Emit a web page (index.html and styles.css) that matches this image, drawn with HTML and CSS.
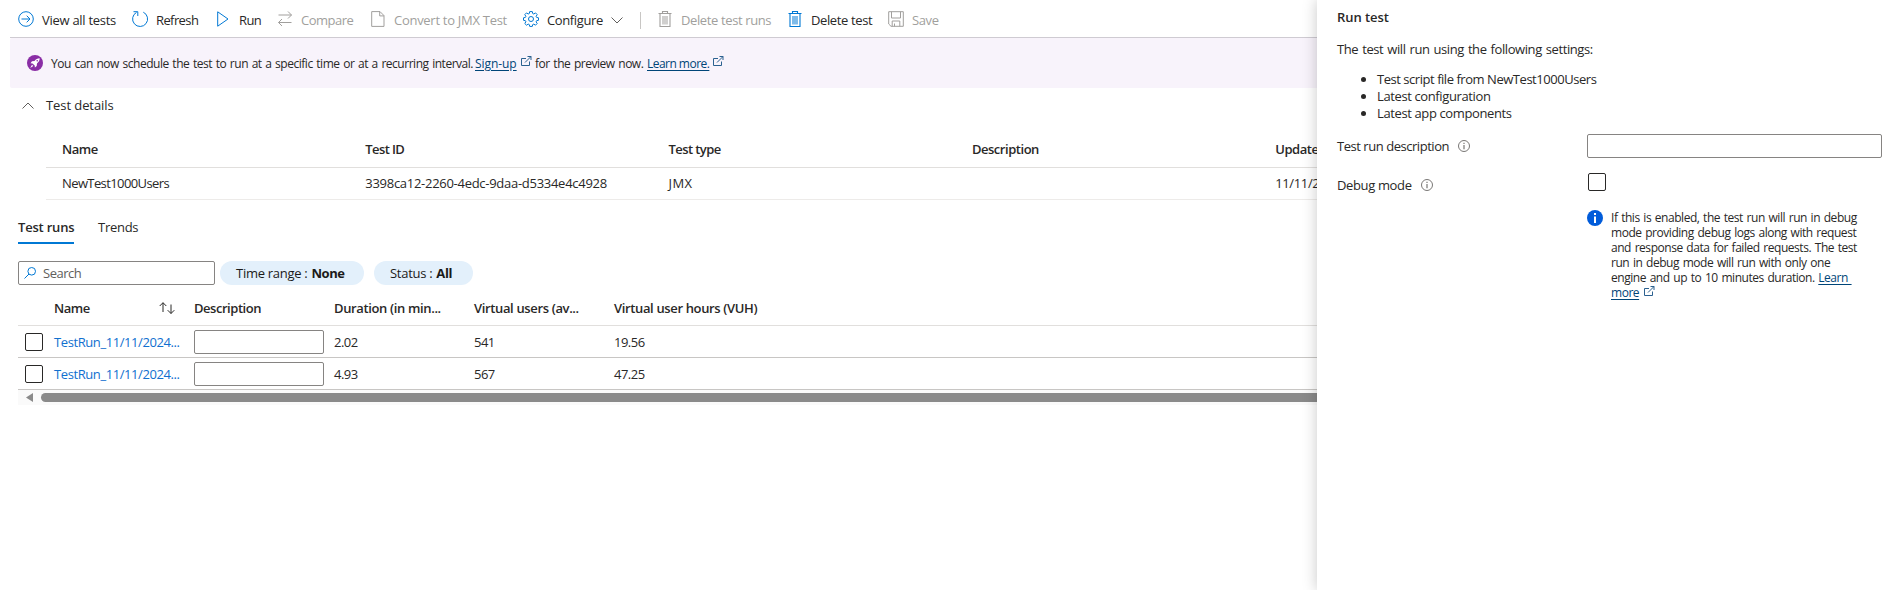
FILE: index.html
```html
<!DOCTYPE html>
<html lang="en">
<head>
<meta charset="utf-8">
<title>Run test</title>
<link rel="stylesheet" href="styles.css">
</head>
<body>
<svg class="defs" aria-hidden="true">
  <symbol id="ext" viewBox="0 0 12 12"><path d="M6 3.500H1.500v7h8V6.500M5 7.500 11 1.500M7.500 1.500h3.500V5" fill="none" stroke="currentColor" stroke-width="1"/></symbol>
  <symbol id="trash" viewBox="0 0 16 16"><path d="M1.500 2.500h13M5.500 2.500v-2h5v2M3 2.500v13h10v-13" fill="none" stroke="currentColor" stroke-width="1.100"/><path d="M5 5h6v8.500H5z" fill="currentColor" opacity=".5"/></symbol>
  <symbol id="info" viewBox="0 0 12 12"><circle cx="6" cy="6" r="5.500" fill="none" stroke="currentColor"/><path d="M6 5v4.200M6 2.700V4" stroke="currentColor" stroke-width="1.200"/></symbol>
</svg>
<div class="app">
  <main class="main">
    <nav class="toolbar">
      <button class="cmd w-view"><svg class="icon" viewBox="0 0 16 16"><circle cx="8" cy="8" r="7.300"/><path d="M3.500 8h8.500M8.700 4.700 12 8l-3.300 3.300"/></svg><span class="s3">View all tests</span></button>
      <button class="cmd w-refresh"><svg class="icon" viewBox="0 0 16 16"><path d="M11.300 1.200A7.500 7.500 0 1 1 4.500 1.400M1.500.700h4.300V5"/></svg><span class="s6">Refresh</span></button>
      <button class="cmd w-run"><svg class="icon" viewBox="0 0 16 16"><path d="M2.700.8v14.400L13 8z"/></svg><span class="s6">Run</span></button>
      <button class="cmd w-compare off"><svg class="icon" viewBox="0 0 16 16"><path d="M1.500 4h13M11 .5 14.500 4 11 7.500M14.500 11.500h-13M5 8l-3.500 3.500L5 15"/></svg><span class="s5">Compare</span></button>
      <button class="cmd w-convert off"><svg class="icon" viewBox="0 0 16 16"><path d="M1.700.600h8.300l4 4v10.800H1.700zM9.700.600v4.300h4.300"/></svg><span class="s3">Convert to JMX Test</span></button>
      <button class="cmd w-config"><svg class="icon gear" viewBox="0 0 16 16"><path d="M6.700.600h2.600l.4 1.900 1.100.5 1.700-1.100 1.700 1.700-1.100 1.700.5 1.100 1.900.4v2.500l-1.900.4-.5 1.100 1.100 1.700-1.700 1.700-1.700-1.100-1.100.5-.4 1.800H6.700l-.4-1.800-1.100-.5-1.700 1.100-1.700-1.700 1.100-1.700-.5-1.100-1.900-.4V6.800l1.900-.4.5-1.100-1.100-1.700 1.700-1.700L5.200 3l1.100-.5z"/><circle cx="8" cy="8" r="2.500"/></svg><span class="s4">Configure</span><svg class="chev" viewBox="0 0 12 7"><path d="M.5.500 6 6 11.500.5"/></svg></button>
      <i class="sep"></i>
      <button class="cmd w-del off"><svg class="icon fill"><use href="#trash"/></svg><span class="s4">Delete test runs</span></button>
      <button class="cmd w-delt"><svg class="icon fill"><use href="#trash"/></svg><span class="s4">Delete test</span></button>
      <button class="cmd off"><svg class="icon" viewBox="0 0 16 16"><path d="M.7.700h14.600v14.600H3L.7 13zM3.500.700V7h9V.700M4.200 15.300V10h7.600v5.300M6.500 12.500v2.800"/></svg><span class="s4">Save</span></button>
    </nav>
    <div class="notice">
      <svg class="rocket" viewBox="0 0 16 16"><circle cx="8" cy="8" r="8" fill="#8a2da5"/><path d="M12.700 3.300c-2.300 0-3.800 1-5.200 2.700L5 6.300 3.500 8.200l2 .2 2.200 2.200.2 2 1.800-1.600.3-2.500c1.700-1.400 2.700-2.900 2.700-5.200zM5 9.700l-1.800 3.200L6.300 11z" fill="#fff"/><circle cx="10.200" cy="5.800" r=".8" fill="#8a2da5"/></svg>
      <span class="n1">You can now schedule the test to run at a specific time or at a recurring interval.</span>
      <a class="link n2">Sign-up</a><svg class="ext"><use href="#ext"/></svg>
      <span class="n3">for the preview now.</span>
      <a class="link n4">Learn more.</a><svg class="ext last"><use href="#ext"/></svg>
    </div>
    <div class="section"><svg class="chev" viewBox="0 0 12 7"><path d="M.5 6.500 6 1l5.500 5.500"/></svg><span class="s1">Test details</span></div>
    <div class="details">
      <div class="drow dhead"><span class="s5">Name</span><span class="s6">Test ID</span><span class="s6">Test type</span><span>Description</span><span>Updated</span></div>
      <div class="drow"><span class="s6">NewTest1000Users</span><span class="s3">3398ca12-2260-4edc-9daa-d5334e4c4928</span><span class="wide">JMX</span><span></span><span>11/11/2024</span></div>
    </div>
    <div class="tabs"><span class="tab active">Test runs</span><span class="tab s3">Trends</span></div>
    <div class="filters">
      <div class="search"><svg class="mag" viewBox="0 0 12 12"><circle cx="7.700" cy="4.300" r="3.800"/><path d="M5 7 .5 11.500"/></svg><span class="s5">Search</span></div>
      <div class="pill p1"><span class="s2">Time range :</span><b>None</b></div>
      <div class="pill p2"><span class="s3">Status :</span><b>All</b></div>
    </div>
    <div class="runs">
      <div class="rrow rhead"><span></span><span class="namecol"><span class="s5">Name</span><svg class="sort" viewBox="0 0 16 12"><path d="M4 10V.800M.7 4 4 .700 7.300 4M12 2.500v9M8.700 8.200 12 11.500l3.300-3.300"/></svg></span><span>Description</span><span class="h1">Duration (in min...</span><span class="h1">Virtual users (av...</span><span class="h1">Virtual user hours (VUH)</span></div>
      <div class="rrow"><span class="box"></span><span class="run">TestRun_11/11/2024...</span><span class="input"></span><span class="s5">2.02</span><span class="s5">541</span><span class="s5">19.56</span></div>
      <div class="rrow"><span class="box"></span><span class="run">TestRun_11/11/2024...</span><span class="input"></span><span class="s5">4.93</span><span class="s5">567</span><span class="s5">47.25</span></div>
      <div class="scroll"><svg class="arrow" viewBox="0 0 7 9"><path d="M7 0v9L0 4.500z"/></svg><i class="thumb"></i></div>
    </div>
  </main>
  <aside class="panel">
    <h2 class="title">Run test</h2>
    <p class="intro">The test will run using the following settings:</p>
    <ul class="list"><li>Test script file from NewTest1000Users</li><li class="s4">Latest configuration</li><li class="s4">Latest app components</li></ul>
    <div class="field"><span class="label"><span class="desc">Test run description</span><svg class="info"><use href="#info"/></svg></span><span class="input"></span></div>
    <div class="field debug"><span class="label"><span>Debug mode</span><svg class="info"><use href="#info"/></svg></span><span class="box"></span></div>
    <div class="hint">
      <svg class="badge" viewBox="0 0 16 16"><circle cx="8" cy="8" r="8" fill="#015cda"/><path d="M7 6.500h2V13H7zM7 3h2v2H7z" fill="#fff"/></svg>
      <p class="hinttext">If this is enabled, the test run will run in debug<br>mode providing debug logs along with request<br>and response data for failed requests. The test<br>run in debug mode will run with only one<br>engine and up to 10 minutes duration. <a class="link">Learn&nbsp;<br>more</a><svg class="ext"><use href="#ext"/></svg></p>
    </div>
  </aside>
</div>
</body>
</html>
```
FILE: styles.css
```css
* { box-sizing: border-box; }
body { margin: 0; background: #fff; color: #292827; font: 13px/18px "Open Sans", "Noto Sans", sans-serif; letter-spacing: -0.36px; overflow: hidden; }
.defs { position: absolute; width: 0; height: 0; }
svg { flex: none; fill: none; stroke: currentColor; }
p, ul, h2 { margin: 0; padding: 0; }
.app { display: flex; width: 1893px; height: 590px; }
.main { width: 1317px; overflow: hidden; white-space: nowrap; }

.s1 { letter-spacing: -0.08px; }
.s2 { letter-spacing: -0.28px; }
.s3 { letter-spacing: -0.28px; }
.s4 { letter-spacing: -0.38px; }
.s5 { letter-spacing: -0.5px; }
.s6 { letter-spacing: -0.6px; }
.h1 { letter-spacing: -0.36px; }
.wide { letter-spacing: 0.4px; }

.toolbar { display: flex; align-items: center; height: 38px; margin-left: 10px; padding: 3px 0 0 8px; border-bottom: 1px solid #cfcbd2; }
.cmd { display: flex; align-items: center; gap: 8px; flex: none; padding: 0; border: 0; background: none; color: #292827; font: inherit; letter-spacing: inherit; }
.icon { width: 16px; height: 16px; color: #0078d4; margin-bottom: 2px; }
.icon.fill { stroke: none; }
.off, .off .icon { color: #a19f9d; }
.w-view { width: 114px; }
.w-refresh { width: 83px; }
.w-run { width: 62px; }
.w-compare { width: 93px; }
.w-convert { width: 153px; }
.w-config { width: 117px; }
.w-del { width: 130px; }
.w-delt { width: 101px; }
.chev { width: 12px; height: 7px; color: #605e5c; }
.sep { width: 1px; height: 17px; margin-right: 16px; background: #c8c6c4; }

.notice { display: flex; align-items: center; height: 50px; margin-left: 10px; padding: 1px 0 0 17px; background: #f8f3fb; border-radius: 2px 0 0 2px; font-size: 12px; }
.rocket { width: 16px; height: 16px; margin: 0 8px 1px 0; stroke: none; }
.n1 { width: 424px; letter-spacing: -0.48px; word-spacing: 1px; }
.n2 { width: 42px; letter-spacing: -0.06px; }
.n3 { width: 112px; letter-spacing: -0.48px; word-spacing: 1px; }
.n4 { width: 62px; letter-spacing: -0.53px; }
.link { color: #004578; text-decoration: underline; text-underline-offset: 2px; }
.ext { width: 12px; height: 12px; margin: 0 3px 6px 3px; color: #2b6190; stroke: none; }

.section { display: flex; align-items: center; gap: 12px; height: 36px; padding: 0 0 3px 22px; }
.section .chev { margin-top: 2px; }
.details { width: 1517px; margin: 9px 0 0 46px; }
.drow { display: grid; grid-template-columns: repeat(5, 303.3px); align-items: center; height: 32px; padding: 0 0 1px 16px; border-bottom: 1px solid #edebe9; }
.dhead { height: 35px; padding: 0 0 3px 16px; border-color: #e1dfdd; }
.dhead, .rhead, .title { font-weight: 600; }
.dhead { letter-spacing: -0.46px; }

.tabs { display: flex; gap: 24px; height: 44px; margin-left: 18px; }
.tab { padding-top: 18px; }
.active { width: 56px; font-weight: 600; border-bottom: 2px solid #0078d4; letter-spacing: -0.2px; }

.filters { display: flex; height: 24px; margin: 17px 0 0 18px; }
.search { display: flex; align-items: center; gap: 7px; width: 197px; padding-left: 5px; border: 1px solid #868482; border-radius: 2px; color: #605e5c; }
.mag { width: 12px; height: 12px; color: #0078d4; }
.pill { display: flex; align-items: center; gap: 4px; height: 24px; padding-left: 16px; border-radius: 12px; background: #e3f0fb; color: #1b1a19; }
.p1 { width: 144px; margin: 0 10px 0 5px; }
.p2 { width: 99px; }
.pill b { letter-spacing: -0.42px; }

.runs { margin-left: 18px; }
.rrow { display: grid; grid-template-columns: 36px 140px 140px 140px 140px 1fr; align-items: center; height: 32px; border-bottom: 1px solid #c8c6c4; }
.rhead { height: 41px; padding-top: 5px; border-color: #e1dfdd; letter-spacing: -0.46px; }
.namecol { display: flex; justify-content: space-between; align-items: center; padding-right: 19px; }
.sort { width: 16px; height: 12px; }
.box { width: 18px; height: 18px; border: 1px solid #292827; border-radius: 2px; background: #fff; }
.rrow .box { margin-left: 7px; }
.run { color: #1170cf; letter-spacing: -0.41px; }
.input { width: 130px; height: 24px; border: 1px solid #868482; border-radius: 2px; background: #fff; }
.scroll { display: flex; align-items: center; height: 15px; padding-left: 8px; background: #fafafa; }
.arrow { width: 7px; height: 9px; margin-right: 8px; fill: #8a8a8a; stroke: none; }
.thumb { flex: 1; height: 9px; border-radius: 5px 0 0 5px; background: #8a8a8a; }

.panel { width: 576px; padding: 8px 11px 0 20px; background: #fff; box-shadow: 0 0 14px rgba(0, 0, 0, 0.22); z-index: 1; }
.title { font-size: 13px; line-height: 18px; letter-spacing: -0.05px; }
.intro { margin-top: 14px; letter-spacing: -0.41px; word-spacing: 1px; }
.list { margin-top: 13px; padding-left: 40px; line-height: 17px; letter-spacing: -0.46px; }
.field { display: flex; align-items: flex-start; margin-top: 12px; }
.label { display: flex; align-items: center; gap: 9px; width: 250px; padding-top: 3px; }
.desc { letter-spacing: -0.46px; }
.field .input { width: 295px; }
.info { width: 12px; height: 12px; color: #797775; stroke: none; }
.debug { margin-top: 15px; }
.debug .box { margin-left: 1px; }
.hint { display: flex; gap: 8px; margin: 16px 0 0 250px; }
.badge { width: 16px; height: 16px; stroke: none; }
.hinttext { font-size: 12px; line-height: 15px; letter-spacing: -0.46px; word-spacing: 1px; white-space: nowrap; }
.hinttext .ext { margin: 0 0 0 4px; }
```
